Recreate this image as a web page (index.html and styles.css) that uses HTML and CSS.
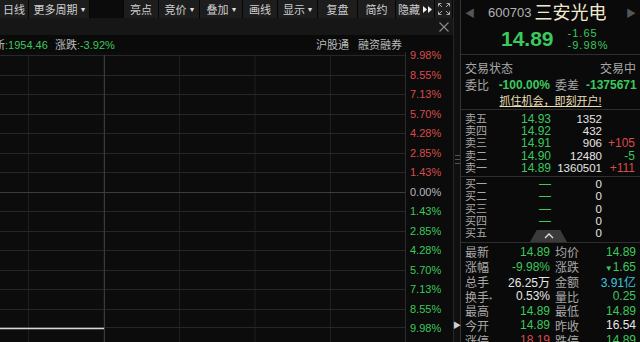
FILE: index.html
```html
<!DOCTYPE html>
<html lang="zh-CN">
<head>
    <meta charset="UTF-8">
    <title>三安光电 600703 分时</title>
    <link rel="stylesheet" href="styles.css">
</head>
<body>
    <div class="main">
        <div class="toolbar">
            <span class="btn">日线</span>
            <span class="btn">更多周期<i class="caret">▾</i></span>
            <span class="tool-gap"></span>
            <span class="btn">亮点</span>
            <span class="btn">竞价<i class="caret">▾</i></span>
            <span class="btn">叠加<i class="caret">▾</i></span>
            <span class="btn">画线</span>
            <span class="btn">显示<i class="caret">▾</i></span>
            <span class="btn">复盘</span>
            <span class="btn">简约</span>
            <span class="btn">隐藏
                <svg width="9" height="7" viewBox="0 0 9 7" fill="#f0f0f0">
                    <polygon points="0,0 4,3.5 0,7"/>
                    <polygon points="5,0 9,3.5 5,7"/>
                </svg>
            </span>
            <span class="btn">
                <svg width="12" height="12" viewBox="0 0 12 12" fill="none" stroke="#a8a8a8" stroke-width="1">
                    <path d="M0.5 3.5V0.5H3.5M0.5 0.5L4 4"/>
                    <path d="M8.5 0.5H11.5V3.5M11.5 0.5L8 4"/>
                    <path d="M0.5 8.5V11.5H3.5M0.5 11.5L4 8"/>
                    <path d="M8.5 11.5H11.5V8.5M11.5 11.5L8 8"/>
                </svg>
            </span>
        </div>

        <div class="tabbar">
            <svg class="close" width="10" height="10" viewBox="0 0 10 10" stroke="#8c8c8c" stroke-width="1.1">
                <path d="M0.5 0.5L9.5 9.5M9.5 0.5L0.5 9.5"/>
            </svg>
        </div>

        <div class="infobar">
            <div class="idx">
                <span class="lbl">最新</span><span class="dn">:1954.46</span>
                <span class="lbl gap">涨跌</span><span class="dn">:-3.92%</span>
            </div>
            <div class="links">
                <span>沪股通</span>
                <span>融资融券</span>
            </div>
        </div>

        <div class="chart">
            <div class="plot">
                <div class="grid">
                    <div class="grid-row"></div>
                    <div class="grid-row"></div>
                    <div class="grid-row"></div>
                    <div class="grid-row"></div>
                    <div class="grid-row"></div>
                    <div class="grid-row"></div>
                    <div class="grid-row"></div>
                    <div class="grid-row zero"></div>
                    <div class="grid-row"></div>
                    <div class="grid-row"></div>
                    <div class="grid-row"></div>
                    <div class="grid-row"></div>
                    <div class="grid-row"></div>
                    <div class="grid-row last"></div>
                </div>
                <svg class="trace" width="406" height="290" viewBox="0 0 406 290">
                    <line x1="104.5" y1="3" x2="104.5" y2="290" stroke="#3a3a3a"/>
                    <polyline points="0,276.5 104,276.5" fill="none" stroke="#d6d6d6" stroke-width="1.5"/>
                </svg>
            </div>
            <div class="axis">
                <span class="up">9.98%</span>
                <span class="up">8.55%</span>
                <span class="up">7.13%</span>
                <span class="up">5.70%</span>
                <span class="up">4.28%</span>
                <span class="up">2.85%</span>
                <span class="up">1.43%</span>
                <span class="flat">0.00%</span>
                <span class="dn">1.43%</span>
                <span class="dn">2.85%</span>
                <span class="dn">4.28%</span>
                <span class="dn">5.70%</span>
                <span class="dn">7.13%</span>
                <span class="dn">8.55%</span>
                <span class="dn">9.98%</span>
            </div>
        </div>
    </div>

    <div class="split">
        <span class="handle"></span>
        <span class="pull">▶</span>
    </div>

    <div class="side">
        <div class="quote">
            <div class="title">
                <span class="nav">◀</span>
                <span class="code">600703</span>
                <span class="name">三安光电</span>
                <span class="nav next">▶</span>
            </div>
            <div class="price-row">
                <span class="last">14.89</span>
                <div class="chg">
                    <span>-1.65</span>
                    <span>-9.98%</span>
                </div>
            </div>
        </div>

        <div class="status">
            <div class="kv"><span>交易状态</span><span>交易中</span></div>
            <div class="pair">
                <span class="lbl">委比</span><span class="val dn b">-100.00%</span>
                <span class="lbl l2">委差</span><span class="val dn b">-1375671</span>
            </div>
            <div class="promo"><span>抓住机会，即刻开户!</span></div>
        </div>

        <div class="book sell">
            <div class="lvl"><span class="lbl">卖五</span><span class="px dn">14.93</span><span class="vol">1352</span><span></span></div>
            <div class="lvl"><span class="lbl">卖四</span><span class="px dn">14.92</span><span class="vol">432</span><span></span></div>
            <div class="lvl"><span class="lbl">卖三</span><span class="px dn">14.91</span><span class="vol">906</span><span class="dif up">+105</span></div>
            <div class="lvl"><span class="lbl">卖二</span><span class="px dn">14.90</span><span class="vol">12480</span><span class="dif dn">-5</span></div>
            <div class="lvl"><span class="lbl">卖一</span><span class="px dn">14.89</span><span class="vol">1360501</span><span class="dif up">+111</span></div>
        </div>

        <div class="book buy">
            <div class="lvl"><span class="lbl">买一</span><span class="px dn">—</span><span class="vol">0</span><span></span></div>
            <div class="lvl"><span class="lbl">买二</span><span class="px dn">—</span><span class="vol">0</span><span></span></div>
            <div class="lvl"><span class="lbl">买三</span><span class="px dn">—</span><span class="vol">0</span><span></span></div>
            <div class="lvl"><span class="lbl">买四</span><span class="px dn">—</span><span class="vol">0</span><span></span></div>
            <div class="lvl"><span class="lbl">买五</span><span class="px dn">—</span><span class="vol">0</span><span></span></div>
            <span class="fold">
                <svg width="10" height="6" viewBox="0 0 10 6" fill="none" stroke="#e0e0e0" stroke-width="1.3">
                    <polyline points="1,5 5,1 9,5"/>
                </svg>
            </span>
        </div>

        <div class="stats">
            <div class="pair"><span class="lbl">最新</span><span class="val dn">14.89</span><span class="lbl l2">均价</span><span class="val dn">14.89</span></div>
            <div class="pair"><span class="lbl">涨幅</span><span class="val dn">-9.98%</span><span class="lbl l2">涨跌</span><span class="val dn"><small>▼</small>1.65</span></div>
            <div class="pair"><span class="lbl">总手</span><span class="val">26.25万</span><span class="lbl l2">金额</span><span class="val cyan">3.91亿</span></div>
            <div class="pair"><span class="lbl">换手<small>*</small></span><span class="val">0.53%</span><span class="lbl l2">量比</span><span class="val dn">0.25</span></div>
            <div class="pair"><span class="lbl">最高</span><span class="val dn">14.89</span><span class="lbl l2">最低</span><span class="val dn">14.89</span></div>
            <div class="pair"><span class="lbl">今开</span><span class="val dn">14.89</span><span class="lbl l2">昨收</span><span class="val">16.54</span></div>
            <div class="pair"><span class="lbl">涨停</span><span class="val up">18.19</span><span class="lbl l2">跌停</span><span class="val dn">14.89</span></div>
        </div>
    </div>
</body>
</html>
```

FILE: styles.css
```css
* {
    margin: 0;
    padding: 0;
    box-sizing: border-box;
}

body {
    width: 640px;
    height: 342px;
    overflow: hidden;
    display: flex;
    background-color: #0b0b0b;
    color: #c8c8c8;
    font-family: "Liberation Sans", "Noto Sans CJK SC", sans-serif;
    font-size: 12px;
}

.up { color: #d84b4b; }
.dn { color: #3cc85c; }
.flat { color: #b8b8b8; }
.cyan { color: #3fc4df; }
.b { font-weight: bold; }

/* ---------- left: chart ---------- */

.main {
    width: 453px;
    display: flex;
    flex-direction: column;
}

.toolbar {
    display: grid;
    grid-template-columns: 28px 60px 33px 34px 40px 42px 34px 39px 39px 37px 38px 17px;
    gap: 1px;
    height: 18px;
    background-color: #060606;
}

.btn {
    display: flex;
    align-items: center;
    justify-content: center;
    gap: 3px;
    background-color: #1d1d1d;
    color: #cfcfcf;
    font-size: 11px;
    white-space: nowrap;
}

.caret {
    font-style: normal;
    font-size: 8px;
    color: #e0e0e0;
}

.tool-gap {
    background-color: #0b0b0b;
}

.tabbar {
    height: 17px;
    display: flex;
    align-items: center;
    justify-content: flex-end;
    padding-right: 4px;
    background-color: #161616;
}

.infobar {
    height: 17px;
    display: flex;
    justify-content: space-between;
    align-items: center;
    font-size: 11px;
    background-color: #0a0a0a;
}

.idx {
    margin-left: -17px;
    white-space: nowrap;
}

.idx .lbl {
    color: #bdbdbd;
}

.idx .gap {
    margin-left: 4px;
}

.links {
    display: flex;
    gap: 9px;
    padding-right: 51px;
    color: #bcbcbc;
}

.chart {
    flex: 1;
    display: flex;
    min-height: 0;
}

.plot {
    position: relative;
    width: 406px;
    border-right: 1px solid #2c2c2c;
    background-color: #0c0c0c;
    background-image: linear-gradient(to right, #1f1f1f 1px, transparent 1px);
    background-size: 75.5px 100%;
    background-position: 28px 3px;
    background-repeat: repeat-x;
}

.grid {
    padding-top: 3px;
}

.grid-row {
    height: 19.5px;
    border-top: 1px solid #272727;
}

.grid-row.zero {
    border-top-color: #3c3c3c;
}

.grid-row.last {
    border-bottom: 1px solid #272727;
}

.trace {
    position: absolute;
    top: 0;
    left: 0;
}

.axis {
    width: 47px;
    display: flex;
    flex-direction: column;
    margin-top: -6px;
    padding-left: 4px;
    font-size: 11px;
}

.axis span {
    height: 19.5px;
    line-height: 19.5px;
}

/* ---------- splitter ---------- */

.split {
    width: 8px;
    display: flex;
    flex-direction: column;
    align-items: center;
    padding-top: 155px;
    background-color: #101010;
    border-left: 1px solid #262626;
    border-right: 1px solid #333;
}

.handle {
    width: 5px;
    height: 9px;
    border-top: 1px solid #555;
    border-bottom: 1px solid #555;
    background: linear-gradient(#555, #555) center / 100% 1px no-repeat;
}

.pull {
    margin-top: auto;
    margin-bottom: 12px;
    font-size: 8px;
    color: #d0d0d0;
}

/* ---------- right: quote panel ---------- */

.side {
    flex: 1;
    display: flex;
    flex-direction: column;
    background-color: #0a0a0a;
}

.quote {
    height: 57px;
    border-bottom: 1px solid #2e2e2e;
}

.title {
    height: 24px;
    display: flex;
    align-items: center;
    padding: 1px 4px 0;
}

.nav {
    font-size: 10px;
    color: #555;
}

.nav.next {
    margin-left: auto;
}

.code {
    margin-left: 13px;
    font-size: 13px;
    color: #b2b2b2;
}

.name {
    margin-left: 3px;
    font-size: 18px;
    line-height: 20px;
    color: #f2e9cf;
}

.price-row {
    display: flex;
    align-items: center;
    padding-left: 40px;
    height: 30px;
}

.last {
    font-size: 21px;
    font-weight: bold;
    color: #3cc85c;
}

.chg {
    display: flex;
    flex-direction: column;
    margin-left: 14px;
    font-size: 11px;
    line-height: 12px;
    letter-spacing: 1px;
    color: #3cc85c;
}

.status {
    padding: 4px 4px 2px;
    border-bottom: 1px solid #2e2e2e;
}

.kv {
    height: 17px;
    display: flex;
    justify-content: space-between;
    align-items: center;
    color: #a8a8a8;
}

.pair {
    display: grid;
    grid-template-columns: 30px 55px 36px 50px;
    align-items: center;
    white-space: nowrap;
}

.status .pair {
    height: 16px;
}

.pair .lbl {
    color: #a8a8a8;
}

.pair .l2 {
    padding-left: 5px;
}

.pair .val {
    text-align: right;
}

.promo {
    height: 15px;
    display: flex;
    align-items: center;
    justify-content: center;
    font-size: 11px;
    color: #e8dfb6;
}

.promo span {
    text-decoration: underline;
}

.book {
    position: relative;
    padding: 3px 4px 2px;
    border-bottom: 1px solid #2e2e2e;
}

.book.buy {
    padding-top: 1px;
}

.lvl {
    display: grid;
    grid-template-columns: 55px 31px 51px 33px;
    align-items: center;
    height: 12.3px;
    line-height: 11px;
    white-space: nowrap;
}

.lvl .lbl {
    font-size: 11px;
    color: #a8a8a8;
}

.lvl .px,
.lvl .vol,
.lvl .dif {
    text-align: right;
}

.lvl .vol {
    font-size: 11.5px;
    color: #e6e6e6;
}

.fold {
    position: absolute;
    left: 69px;
    bottom: 0;
    width: 37px;
    height: 12px;
    display: flex;
    align-items: center;
    justify-content: center;
    background-color: #3a3a3a;
    clip-path: polygon(18% 0, 82% 0, 100% 100%, 0 100%);
}

.stats {
    padding: 0.5px 4px 0;
}

.stats .pair {
    height: 14.7px;
}

.stats .val {
    color: #e6e6e6;
}

.stats .val.dn { color: #3cc85c; }
.stats .val.up { color: #d84b4b; }
.stats .val.cyan { color: #3fc4df; }

.stats small {
    font-size: 8px;
}
```
